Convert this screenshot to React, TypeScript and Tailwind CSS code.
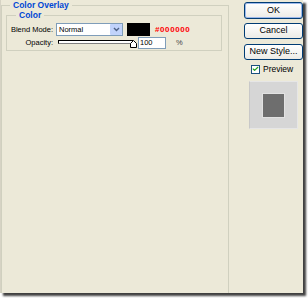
import { Check } from 'lucide-react';

function XpButton({ label, primary }: { label: string; primary?: boolean }) {
  return (
    <button
      type="button"
      className={
        'flex w-[59px] items-center justify-center rounded-[3px] border border-[#003C74] bg-gradient-to-b from-white to-[#ECEBE6] text-[9px] text-black ' +
        (primary ? 'h-[17px] shadow-[inset_0_0_0_1px_#9DB9EB]' : 'h-[16px]')
      }
    >
      {label}
    </button>
  );
}

export default function App() {
  return (
    <div className="relative h-[298px] w-[308px] overflow-hidden bg-white font-['Liberation_Sans',Arial,sans-serif] text-black">
      <div className="flex h-[293px] w-[303px] overflow-hidden border-l border-[#D6D3C4] bg-[#ECE9D8] shadow-[3px_3px_2px_rgba(0,0,0,0.75)]">
        {/* left: layer style group */}
        <fieldset className="mt-[1px] h-[310px] w-[228px] shrink-0 border border-[#D0D0BF]">
          <legend className="ml-[8px] px-[3px] text-[8.5px] leading-[9px] font-bold text-[#0046D5]">
            Color Overlay
          </legend>
          <fieldset className="ml-[4px] mt-[1px] h-[40px] w-[216px] border border-[#D0D0BF]">
            <legend className="ml-[9px] px-[3px] text-[8.5px] leading-[9px] font-bold text-[#0046D5]">
              Color
            </legend>
            <div className="mt-[3px] flex items-center">
              <span className="w-[46px] text-right text-[7.5px] leading-[13px]">Blend Mode:</span>
              <div className="ml-[3px] flex h-[13px] w-[67px] items-center border border-[#7F9DB9] bg-white">
                <span className="flex-1 pl-[2px] text-[7.5px] leading-[11px]">Normal</span>
                <span className="flex h-[11px] w-[12px] items-center justify-center rounded-[1px] bg-[#C1D3FB]">
                  <svg width="7" height="5" viewBox="0 0 7 5">
                    <path d="M1 1 L3.5 3.5 L6 1" stroke="#4D6185" strokeWidth="1.4" fill="none" />
                  </svg>
                </span>
              </div>
              <div className="ml-[4px] h-[13px] w-[23px] bg-black" />
              <span className="ml-[5px] text-[8px] font-bold leading-[13px] tracking-[0.6px] text-[#FF0000]">#000000</span>
            </div>
            <div className="mt-[1px] flex items-center">
              <span className="w-[46px] text-right text-[7.5px] leading-[12px]">Opacity:</span>
              <div className="relative ml-[5px] h-[12px] w-[80px]">
                <div className="absolute left-0 top-[3px] h-[4px] w-[75px] border border-black border-b-[#808080] bg-white" />
                <svg className="absolute left-[72px] top-[3px]" width="7" height="8" viewBox="0 0 7 8">
                  <path d="M0.5 7.5 L0.5 3.5 L3.5 0.5 L6.5 3.5 L6.5 7.5 Z" fill="white" stroke="black" strokeWidth="1" />
                </svg>
              </div>
              <div className="flex h-[12px] w-[28px] items-center border border-[#7F9DB9] bg-white pl-[1px] text-[7.5px]">
                100
              </div>
              <span className="ml-[10px] text-[7.5px] leading-[12px] text-[#444]">%</span>
            </div>
          </fieldset>
        </fieldset>

        {/* right: buttons and preview */}
        <div className="ml-[15px] flex flex-col pt-[2px]">
          <XpButton label="OK" primary />
          <div className="mt-[4px]">
            <XpButton label="Cancel" />
          </div>
          <div className="mt-[5px]">
            <XpButton label="New Style..." />
          </div>
          <div className="ml-[7px] mt-[4px] flex items-center">
            <span className="flex h-[9px] w-[9px] items-center justify-center border border-[#1C5180] bg-white">
              <Check className="h-[8px] w-[8px] text-[#21A121]" strokeWidth={4} />
            </span>
            <span className="ml-[3px] text-[8.5px] leading-[10px]">Preview</span>
          </div>
          <div className="ml-[5px] mt-[7px] flex h-[48px] w-[49px] items-center justify-center border border-[#E6E6E6] border-l-[#C8C8C8] bg-[#D6D6D6]">
            <div className="h-[25px] w-[23px] border border-[#E2E2E2] bg-[#6E6E6E]" />
          </div>
        </div>
      </div>
    </div>
  );
}
